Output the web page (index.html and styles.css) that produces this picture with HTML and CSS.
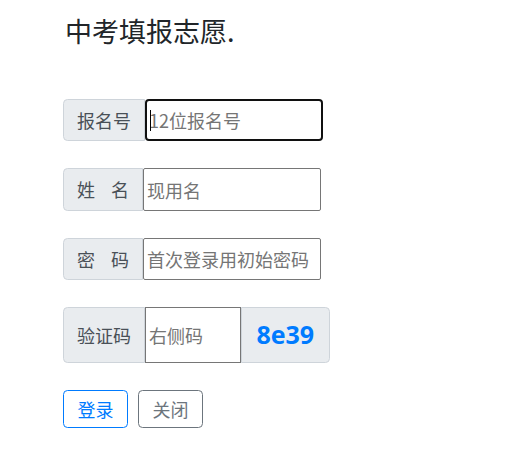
FILE: index.html
```html
<!DOCTYPE html>
<html lang="zh">
<head>
<meta charset="utf-8">
<title>中考填报志愿</title>
<link rel="stylesheet" href="styles.css">
</head>
<body>
<main class="page">
  <h1 class="title">中考填报志愿.</h1>
  <form class="form">
    <div class="group">
      <span class="label">报名号</span>
      <span class="field">
        <input class="input input--active" type="text" placeholder="12位报名号">
        <span class="caret"></span>
      </span>
    </div>
    <div class="group">
      <span class="label"><span class="label-spread">姓名</span></span>
      <input class="input" type="text" placeholder="现用名">
    </div>
    <div class="group">
      <span class="label"><span class="label-spread">密码</span></span>
      <input class="input" type="password" placeholder="首次登录用初始密码">
    </div>
    <div class="group group--tall">
      <span class="label">验证码</span>
      <input class="input input--short" type="text" placeholder="右侧码">
      <span class="label label--end code">8e39</span>
    </div>
    <div class="actions">
      <button type="button" class="btn btn--primary">登录</button>
      <button type="button" class="btn btn--secondary">关闭</button>
    </div>
  </form>
</main>
</body>
</html>
```
FILE: styles.css
```css
html, body {
  margin: 0;
  padding: 0;
  background: #fff;
}

body {
  font-family: "Noto Sans CJK SC", "Noto Sans", sans-serif;
  font-size: 18px;
  color: #212529;
}

.page {
  padding: 15px 0 0 63px;
}

.title {
  margin: 0 0 51.5px;
  padding-left: 2px;
  font-size: 27px;
  font-weight: 400;
  line-height: 1.2;
  color: #212529;
}

.group {
  display: flex;
  align-items: stretch;
  height: 42.5px;
  margin-bottom: 27px;
}

.group--tall {
  height: 56px;
}

.label {
  display: flex;
  align-items: center;
  box-sizing: border-box;
  padding: 0 13px;
  font-size: 18px;
  line-height: 27px;
  color: #495057;
  background: #e9ecef;
  border: 1px solid #ced4da;
  border-radius: 4.5px 0 0 4.5px;
  white-space: nowrap;
}

.label-spread {
  display: inline-block;
  width: 52px;
  text-align: justify;
  text-align-last: justify;
}

.label--end {
  border-radius: 0 4.5px 4.5px 0;
}

.code {
  padding: 0 14.5px 2px;
  font-family: "Open Sans", "Liberation Sans", sans-serif;
  font-size: 25px;
  font-weight: 700;
  color: #007bff;
}

.field {
  position: relative;
  display: flex;
}

.input {
  box-sizing: border-box;
  width: 178px;
  margin: 0;
  padding: 1px 3px;
  font-family: "Noto Sans CJK SC", "Noto Sans", sans-serif;
  font-size: 18px;
  color: #212529;
  background: #fff;
  border: 1px solid #767676;
  border-radius: 2px;
  outline: none;
}

.input::placeholder {
  color: #757575;
  opacity: 1;
}

.input--active {
  border: 2px solid #101010;
  border-radius: 4px;
  padding: 1px 2px;
}

.input--short {
  width: 96px;
  border-radius: 0;
}

.caret {
  position: absolute;
  left: 5px;
  top: 11px;
  width: 1px;
  height: 21px;
  background: #000;
}

.actions {
  display: flex;
  gap: 10px;
}

.btn {
  box-sizing: border-box;
  margin: 0;
  padding: 4.5px 13.5px;
  font-family: "Noto Sans CJK SC", "Noto Sans", sans-serif;
  font-size: 18px;
  line-height: 27px;
  background: #fff;
  border: 1px solid;
  border-radius: 4.5px;
  cursor: pointer;
}

.btn--primary {
  color: #007bff;
  border-color: #007bff;
}

.btn--secondary {
  color: #6c757d;
  border-color: #6c757d;
}
```
